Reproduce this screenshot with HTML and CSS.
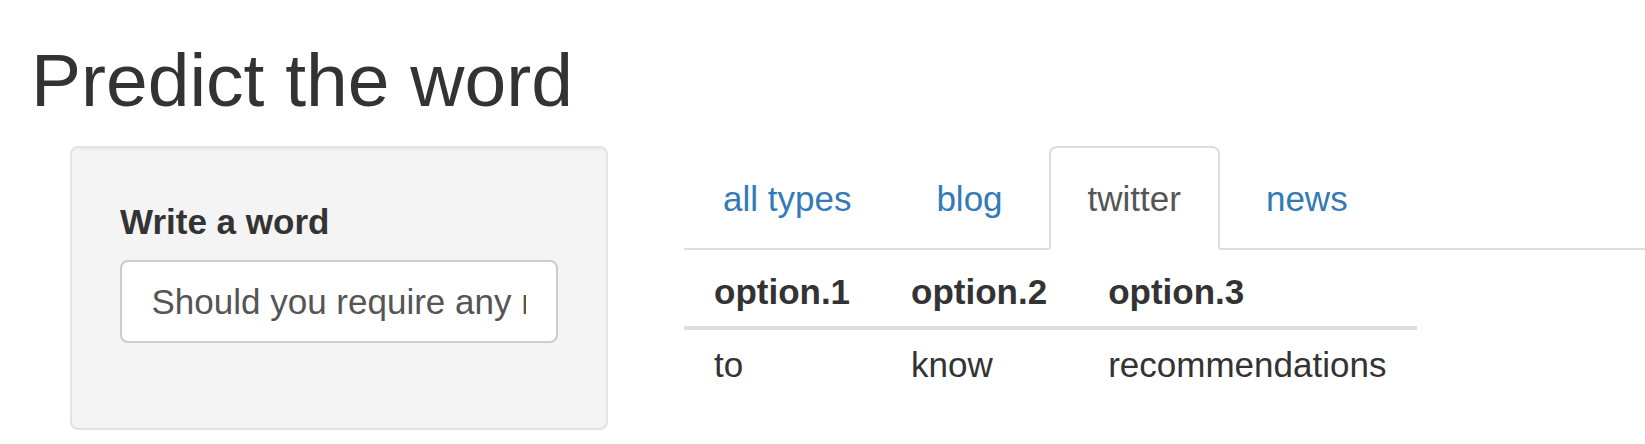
FILE: index.html
```html
<!DOCTYPE html>
<html lang="en">
<head>
<meta charset="utf-8">
<title>Predict the word</title>
<link rel="stylesheet" href="styles.css">
</head>
<body>
<div class="page">
  <h1 class="title">Predict the word</h1>
  <div class="layout">
    <form class="well">
      <div class="form-group">
        <label class="control-label" for="word">Write a word</label>
        <input id="word" class="form-control" type="text" value="Should you require any recommendations">
      </div>
    </form>
    <div class="main">
      <ul class="nav-tabs">
        <li><a href="#">all types</a></li>
        <li><a href="#">blog</a></li>
        <li class="active"><a href="#">twitter</a></li>
        <li><a href="#">news</a></li>
      </ul>
      <table class="result">
        <thead>
          <tr><th>option.1</th><th>option.2</th><th>option.3</th></tr>
        </thead>
        <tbody>
          <tr><td>to</td><td>know</td><td>recommendations</td></tr>
        </tbody>
      </table>
    </div>
  </div>
</div>
</body>
</html>
```
FILE: styles.css
```css
* { box-sizing: border-box; }
html, body { margin: 0; padding: 0; background: #fff; }
body {
  font-family: "Liberation Sans", Arial, Helvetica, sans-serif;
  font-size: 35px;
  line-height: 47px;
  color: #333;
}
.page {
  padding: 39px 0 0 31px;
}
.title {
  margin: 0 0 24.5px 0;
  font-size: 75px;
  line-height: 1.1;
  font-weight: 400;
  color: #333;
}
.layout {
  display: flex;
  align-items: flex-start;
}
.well {
  margin: 0 0 0 39px;
  width: 538px;
  padding: 50px 48px 85px 48px;
  background: #f4f4f4;
  border: 2px solid #e3e3e3;
  border-radius: 8px;
  box-shadow: inset 0 2px 2px rgba(0,0,0,0.03);
}
.form-group { margin: 0; }
.control-label {
  display: block;
  font-weight: 700;
  margin-bottom: 15px;
}
.form-control {
  display: block;
  width: 100%;
  height: 83px;
  padding: 0 30px 0 29.5px;
  font-family: "Liberation Sans", Arial, Helvetica, sans-serif;
  font-size: 35px;
  color: #555;
  background: #fff;
  border: 2px solid #ccc;
  border-radius: 8px;
  outline: none;
}
.main {
  flex: 1;
  margin-left: 76px;
}
.nav-tabs {
  list-style: none;
  margin: 0;
  padding: 0;
  display: flex;
  border-bottom: 2px solid #ddd;
}
.nav-tabs li {
  margin: 0 7px -2px 0;
}
.nav-tabs a {
  display: block;
  padding: 27px 37px 26px;
  border: 2px solid transparent;
  border-radius: 8px 8px 0 0;
  color: #337ab7;
  text-decoration: none;
}
.nav-tabs .active a {
  color: #555;
  background: #fff;
  border-color: #ddd;
  border-bottom-color: transparent;
}
.result {
  margin-top: 7px;
  border-collapse: collapse;
}
.result th, .result td {
  text-align: left;
  padding: 11px 31px 11px 30px;
  white-space: nowrap;
}
.result th {
  font-weight: 700;
  border-bottom: 4px solid #ddd;
}
```
